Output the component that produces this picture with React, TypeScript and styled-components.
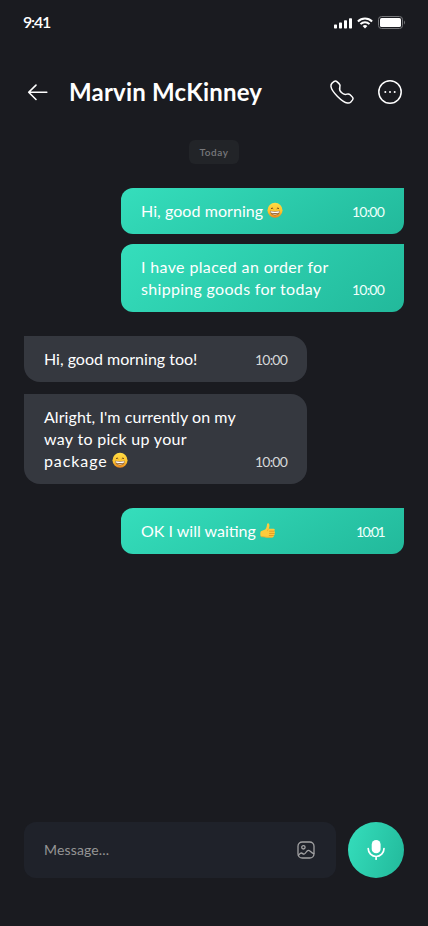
import React from "react";
import styled, { createGlobalStyle } from "styled-components";

const GlobalStyle = createGlobalStyle`
  * { box-sizing: border-box; }
  body { margin: 0; background: #1a1b20; font-family: Lato, "Open Sans", sans-serif; }
  svg { display: block; flex: none; }
`;

const gradient = (angle: number) => `linear-gradient(${angle}deg, #35debc, #22b99b)`;

const Screen = styled.main`
  width: 428px;
  height: 926px;
  display: flex;
  flex-direction: column;
  background: #1a1b20;
  color: #fff;
  overflow: hidden;
`;

const StatusBar = styled.div`
  height: 44px;
  flex: none;
  display: flex;
  align-items: center;
  justify-content: space-between;
  padding: 1px 23px 0 23px;
`;

const Clock = styled.span`
  font-size: 16px;
  font-weight: 600;
  line-height: 20px;
  height: 22px;
  letter-spacing: -1.2px;
`;

const StatusIcons = styled.div`
  display: flex;
  align-items: center;
  gap: 5px;
`;

const Header = styled.header`
  height: 48px;
  margin-top: 24px;
  flex: none;
  display: flex;
  align-items: center;
  padding: 0 24px;
`;

const IconButton = styled.button`
  display: flex;
  padding: 0;
  border: 0;
  background: none;
  color: #fff;
`;

const Title = styled.h1`
  flex: 1;
  margin: 0 0 0 17px;
  font-size: 24px;
  line-height: 30px;
  font-weight: 700;
  letter-spacing: 0.2px;
  white-space: nowrap;
`;

const Actions = styled.div`
  display: flex;
  gap: 20px;
`;

const Conversation = styled.section`
  flex: 1;
  display: flex;
  flex-direction: column;
  padding: 24px 24px 0;
`;

const DayLabel = styled.span`
  align-self: center;
  width: 50px;
  height: 24px;
  border-radius: 6px;
  background: #222428;
  color: #77787b;
  font-size: 10px;
  font-weight: 600;
  line-height: 25px;
  text-align: center;
  letter-spacing: 0.6px;
`;

const Bubble = styled.article<{ $sent?: boolean; $gap: number; $angle: number }>`
  width: 283px;
  margin-top: ${(p) => p.$gap}px;
  padding: 12px 20px;
  display: flex;
  align-items: flex-end;
  justify-content: space-between;
  align-self: ${(p) => (p.$sent ? "flex-end" : "flex-start")};
  border-radius: ${(p) => (p.$sent ? "12px 0 12px 12px" : "0 16px 16px 16px")};
  background: ${(p) => (p.$sent ? gradient(p.$angle) : "#35383f")};
`;

const Copy = styled.div`
  font-size: 16px;
  line-height: 22px;
`;

const Line = styled.div<{ $track: number }>`
  height: 22px;
  display: flex;
  align-items: center;
  gap: 4px;
  white-space: nowrap;
  letter-spacing: ${(p) => p.$track}px;
`;

const Time = styled.time<{ $sent?: boolean; $track: number }>`
  font-size: 14px;
  line-height: 20px;
  height: 20px;
  color: ${(p) => (p.$sent ? "#effffb" : "#d6d7d8")};
  letter-spacing: ${(p) => p.$track}px;
`;

const Composer = styled.footer`
  height: 56px;
  margin-bottom: 48px;
  flex: none;
  display: flex;
  gap: 12px;
  padding: 0 24px;
`;

const Field = styled.div`
  flex: 1;
  display: flex;
  align-items: center;
  padding: 0 20px;
  border-radius: 12px;
  background: #1f222a;
`;

const Input = styled.input`
  flex: 1;
  min-width: 0;
  padding: 0;
  border: 0;
  outline: 0;
  background: none;
  color: #fff;
  font: 400 14px/20px Lato, sans-serif;
  letter-spacing: 0.15px;
  &::placeholder { color: #959595; opacity: 1; }
`;

const MicButton = styled.button`
  width: 56px;
  height: 56px;
  padding: 0;
  border: 0;
  border-radius: 50%;
  display: grid;
  place-items: center;
  background: ${gradient(107)};
`;

const Signal = () => (
  <svg width="18" height="12" viewBox="0 0 18 12" fill="#fff">
    <rect x="0" y="7.5" width="3" height="4" rx=".7" />
    <rect x="5" y="5.5" width="3" height="6" rx=".7" />
    <rect x="10" y="3.3" width="3" height="8.2" rx=".7" />
    <rect x="15" y="1.2" width="3" height="10.3" rx=".7" />
  </svg>
);

const Wifi = () => (
  <svg width="16" height="12" viewBox="0 0 16 12" fill="none" stroke="#fff" strokeWidth="2">
    <path d="M.9 4.5C4.9.5 11.1.5 15.1 4.5" />
    <path d="M3.5 7.1C6 4.7 10 4.7 12.5 7.1" />
    <path d="M5.6 9.1Q8 7 10.4 9.1L8 11.5Z" fill="#fff" stroke="none" />
  </svg>
);

const Battery = () => (
  <svg width="27" height="13" viewBox="0 0 27 13" fill="none">
    <rect x=".5" y=".5" width="24" height="12" rx="3" stroke="#76777a" />
    <rect x="2" y="2" width="21" height="9" rx="1.6" fill="#fff" />
    <path d="M26 4.5c1.2.8 1.2 3.2 0 4Z" fill="#76777a" />
  </svg>
);

const BackIcon = () => (
  <svg width="28" height="28" viewBox="0 0 28 28" fill="none" stroke="#fff" strokeWidth="1.6" strokeLinecap="round" strokeLinejoin="round">
    <path d="M22.8 14.3H4.7M12 7.1l-7.3 7.2 7.3 7.2" />
  </svg>
);

const PhoneIcon = () => (
  <svg width="28" height="28" viewBox="0 0 28 28" fill="none" stroke="#fff" strokeWidth="1.5" strokeLinecap="round" strokeLinejoin="round">
    <path d="M13.45 14.55c4.66 4.65 5.72-.73 8.68 2.23 2.86 2.85 4.5 3.42.88 7.04-.46.36-3.34 4.74-13.46-5.38C-.57 8.33 3.8 5.44 4.17 4.99c3.63-3.64 4.19-1.98 7.04.88 2.97 2.95-2.41 4.03 2.24 8.68Z" />
  </svg>
);

const MoreIcon = () => (
  <svg width="28" height="28" viewBox="0 0 28 28" fill="none">
    <circle cx="14" cy="14" r="11.2" stroke="#fff" strokeWidth="1.5" />
    <g fill="#fff"><circle cx="9.3" cy="14" r="1" /><circle cx="14" cy="14" r="1" /><circle cx="18.7" cy="14" r="1" /></g>
  </svg>
);

const Smile = () => (
  <svg width="16" height="18" viewBox="0 0 16 18">
    <defs>
      <linearGradient id="face" x1="0" y1="0" x2="0" y2="1">
        <stop offset="0" stopColor="#ffdc45" /><stop offset=".6" stopColor="#fdc22d" /><stop offset="1" stopColor="#e9841e" />
      </linearGradient>
    </defs>
    <circle cx="8" cy="8.2" r="7.5" fill="url(#face)" />
    <path d="M4.2 6.5q.9-1.5 1.8 0M10 6.5q.9-1.5 1.8 0" fill="none" stroke="#70481d" strokeWidth="1" strokeLinecap="round" />
    <path d="M3 8.8q5 .8 10 0c0 2.9-2.1 4.6-5 4.6s-5-1.7-5-4.6Z" fill="#946332" />
    <path d="M3.6 9.3q4.4.7 8.8 0v1.3q-4.4 1-8.8 0Z" fill="#fff" />
    <path d="M4.3 11.6q3.7.7 7.4 0Q8 14.4 4.3 11.6Z" fill="#e4c49a" />
  </svg>
);

const ThumbsUp = () => (
  <svg width="16" height="18" viewBox="0 0 17 18">
    <path d="M1 9.2 5.5 7.3C7.3 5.8 7.2 2.7 7.6 1.2 8 .2 9.9.5 10 2.3c.2 1.8-.4 3.2-.7 4.3h5.2c1.5 0 1.6 2.1.4 2.5 1.5.4 1.2 2.2.2 2.5.9.6.5 2-.5 2.2.4.9-.3 2-1.6 2H7.3c-2.1 0-3.8-1.1-6-.8C.1 15 .1 9.8 1 9.2Z" fill="#ffcb3d" />
    <path d="M10.2 9.2h4.5M10.1 11.6h4.7M9.8 13.8h4.4" stroke="#e79220" strokeWidth=".9" strokeLinecap="round" />
    <path d="M1.2 15c2.2-.3 4 .6 6.1.6H13M9.3 6.7c-1 .8-1.3 1.2-1.5 2.5" fill="none" stroke="#f1a72c" strokeWidth=".8" />
  </svg>
);

const ImageIcon = () => (
  <svg width="20" height="20" viewBox="0 0 20 20" fill="none" stroke="#a2a2a3" strokeWidth="1.3" strokeLinecap="round" strokeLinejoin="round">
    <rect x="2" y="2" width="16" height="16" rx="4.3" />
    <circle cx="7.4" cy="7.3" r="1.7" />
    <path d="M2.5 15.2c1.2-1.3 1.6-2.3 2.8-2.2 1.4.1 1.7 1.5 3.1 1 1.5-.5 2.1-3.7 3.9-3.7 1.7 0 2.5 2.3 5.4 3.4" />
  </svg>
);

const MicIcon = () => (
  <svg width="20" height="22" viewBox="0 0 20 22" fill="none">
    <rect x="5.7" y="1" width="8.9" height="13.3" rx="4.4" fill="#fff" />
    <path d="M2.2 9.6a7.9 7.9 0 0 0 15.8 0M10.1 17.7v2.5" stroke="#fff" strokeWidth="1.7" strokeLinecap="round" />
  </svg>
);

interface TextLine { text: string; track: number; emoji?: React.ReactNode }
interface Message { sent?: boolean; gap: number; time: string; timeTrack: number; lines: TextLine[] }

const messages: Message[] = [
  { sent: true, gap: 24, time: "10:00", timeTrack: -0.8, lines: [{ text: "Hi, good morning", track: 0.07, emoji: <Smile /> }] },
  { sent: true, gap: 10, time: "10:00", timeTrack: -0.8, lines: [{ text: "I have placed an order for", track: 0.36 }, { text: "shipping goods for today", track: 0.31 }] },
  { gap: 24, time: "10:00", timeTrack: -0.8, lines: [{ text: "Hi, good morning too!", track: 0 }] },
  { gap: 12, time: "10:00", timeTrack: -0.8, lines: [{ text: "Alright, I'm currently on my", track: 0.07 }, { text: "way to pick up your", track: 0.3 }, { text: "package", track: 0.9, emoji: <Smile /> }] },
  { sent: true, gap: 24, time: "10:01", timeTrack: -1.6, lines: [{ text: "OK I will waiting", track: 0, emoji: <ThumbsUp /> }] },
];

export default function App() {
  return (
    <Screen>
      <GlobalStyle />
      <StatusBar>
        <Clock>9:41</Clock>
        <StatusIcons><Signal /><Wifi /><Battery /></StatusIcons>
      </StatusBar>
      <Header>
        <IconButton aria-label="Back"><BackIcon /></IconButton>
        <Title>Marvin McKinney</Title>
        <Actions>
          <IconButton aria-label="Call"><PhoneIcon /></IconButton>
          <IconButton aria-label="More"><MoreIcon /></IconButton>
        </Actions>
      </Header>
      <Conversation>
        <DayLabel>Today</DayLabel>
        {messages.map((m, i) => (
          <Bubble key={i} $sent={m.sent} $gap={m.gap} $angle={m.lines.length > 1 ? 140 : 150}>
            <Copy>
              {m.lines.map((line) => (
                <Line key={line.text} $track={line.track}><span>{line.text}</span>{line.emoji}</Line>
              ))}
            </Copy>
            <Time $sent={m.sent} $track={m.timeTrack}>{m.time}</Time>
          </Bubble>
        ))}
      </Conversation>
      <Composer>
        <Field>
          <Input placeholder="Message..." aria-label="Message" />
          <ImageIcon />
        </Field>
        <MicButton aria-label="Record a voice message"><MicIcon /></MicButton>
      </Composer>
    </Screen>
  );
}
